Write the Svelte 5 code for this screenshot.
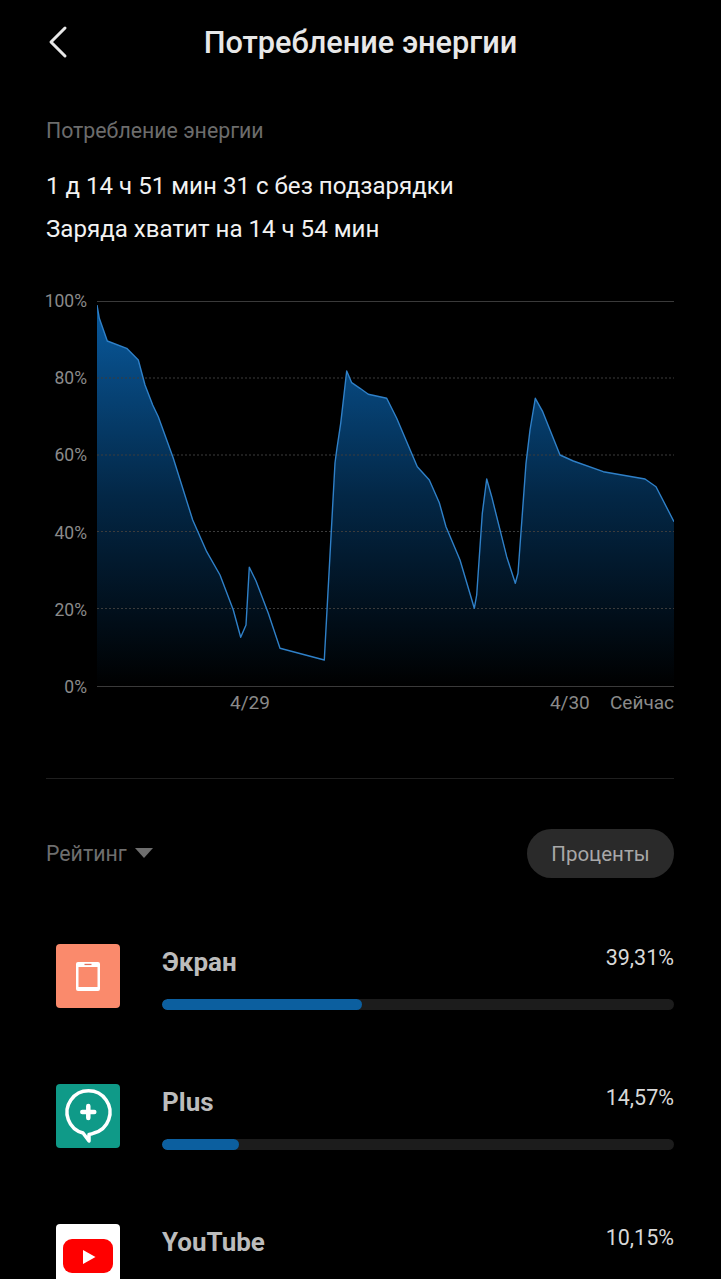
<script>
  const W = 577, H = 386;
  const raw = [[97,305],[99.3,318.3],[107.3,341],[126.7,348.3],[138.3,360],[145,385],[152.7,405],[158.3,416.7],[173.3,458.3],[192.7,520],[206.7,551.7],[220,575],[233.3,610],[240.7,637.3],[246,625],[249.3,567.3],[256,581],[268.3,613.3],[280,648.3],[324.3,660],[335,463],[336.7,450],[340.7,423.3],[346.7,371],[351.7,382.7],[360,388.3],[368.3,394.3],[386.7,398.3],[396.7,418.3],[417.3,466.7],[429.3,480],[439.3,502.7],[446,526.7],[460,560],[474.3,608.3],[476.7,595],[482.3,513.3],[486.7,479],[491.7,496.7],[506.7,556.7],[515.3,583.3],[518,573.3],[526,463.3],[530,430],[535.3,398.3],[542.7,411.7],[560,455],[573.3,461],[603.3,471.7],[645,479],[656,486.7],[674,521.7]];
  const line = raw.map(([x, y]) => `${(x - 97).toFixed(1)},${(y - 301).toFixed(1)}`).join(' ');
  const area = `0,${H} ${line} ${W},${H}`;
  const yLabels = ['100%', '80%', '60%', '40%', '20%', '0%'];
  const dashed = [77, 154, 230.5, 307.5];
  const rows = [
    { name: 'Экран', pct: '39,31%', w: 200, icon: 'screen' },
    { name: 'Plus', pct: '14,57%', w: 77, icon: 'plus' },
    { name: 'YouTube', pct: '10,15%', w: 56, icon: 'yt' }
  ];
</script>

<div class="page">
  <header class="top">
    <svg class="back" width="22" height="34" viewBox="0 0 22 34"><path d="M18 3 L4 17 L18 31" fill="none" stroke="#e8e8e8" stroke-width="3" stroke-linecap="round" stroke-linejoin="round"/></svg>
    <h1>Потребление энергии</h1>
  </header>

  <section class="summary">
    <div class="cap">Потребление энергии</div>
    <div class="line first">1 д 14 ч 51 мин 31 с без подзарядки</div>
    <div class="line second">Заряда хватит на 14 ч 54 мин</div>
  </section>

  <section class="chart">
    <div class="ylabels">
      {#each yLabels as l}<span>{l}</span>{/each}
    </div>
    <svg class="plot" width={W} height={H + 1} viewBox="0 0 {W} {H + 1}">
      <defs>
        <linearGradient id="fill" x1="0" y1="0" x2="0" y2="1">
          <stop offset="0" stop-color="#095a9e" />
          <stop offset="0.5" stop-color="#032746" />
          <stop offset="1" stop-color="#000" />
        </linearGradient>
      </defs>
      <polygon points={area} fill="url(#fill)" />
      <line x1="0" x2={W} y1="0.5" y2="0.5" stroke="#3a3a3a" />
      <line x1="0" x2={W} y1="385.5" y2="385.5" stroke="#3a3a3a" />
      {#each dashed as y}
        <line x1="0" x2={W} y1={y} y2={y} stroke="#3c3c3c" stroke-dasharray="2 2" />
      {/each}
      <polyline points={line} fill="none" stroke="#2f80c8" stroke-width="1.4" stroke-linejoin="round" />
    </svg>
    <div class="xlabels">
      <span class="d1">4/29</span>
      <span class="d2">4/30</span>
      <span>Сейчас</span>
    </div>
  </section>

  <hr class="sep" />

  <section class="sort">
    <div class="rating">Рейтинг <i class="tri"></i></div>
    <div class="pill">Проценты</div>
  </section>

  <section class="list">
    {#each rows as r}
      <div class="row">
        <div class="icon {r.icon}">
          {#if r.icon === 'screen'}
            <svg width="24" height="29" viewBox="0 0 24 29"><rect width="24" height="29" rx="2" fill="#fff"/><rect x="2.500" y="5" width="19" height="20" fill="#fa8a6c"/><rect x="8.500" y="1.800" width="7" height="1.300" fill="#e0705a"/></svg>
          {:else if r.icon === 'plus'}
            <svg width="64" height="64" viewBox="0 0 64 64"><path d="M38 49 A21.500 21.500 0 1 0 27 49 L33 57 L33 50.500 Q36 50 38 49 Z" fill="none" stroke="#fff" stroke-width="3.500" stroke-linejoin="round"/><path d="M32.300 22 V34 M26.300 28 H38.300" stroke="#fff" stroke-width="4.500" stroke-linecap="round"/></svg>
          {:else}
            <svg width="50" height="34" viewBox="0 0 50 34"><rect width="50" height="34" rx="9" fill="#f00"/><path d="M20 11 L32.500 18 L20 25 Z" fill="#fff"/></svg>
          {/if}
        </div>
        <div class="info">
          <div class="head">
            <span class="name">{r.name}</span>
            <span class="pct">{r.pct}</span>
          </div>
          <div class="track"><div class="bar" style="width:{r.w}px"></div></div>
        </div>
      </div>
    {/each}
  </section>
</div>

<style>
  :global(body) { margin: 0; background: #000; }
  .page {
    width: 721px; height: 1279px; overflow: hidden; background: #000;
    font-family: Roboto, "Noto Sans", sans-serif; box-sizing: border-box;
  }
  .top { display: flex; align-items: center; height: 84px; padding-left: 47px; position: relative; }
  .back { margin-top: -1px; }
  h1 {
    position: absolute; left: 0; right: 0; top: 26px; margin: 0; text-align: center;
    font-size: 30.7px; line-height: 34px; font-weight: 500; color: #e8e8e8;
  }
  .summary { padding: 0 46px; }
  .cap { margin-top: 33px; font-size: 21.3px; line-height: 28px; color: #6c6c6c; }
  .line { font-size: 24.1px; line-height: 30px; color: #f2f2f2; }
  .first { margin-top: 26px; }
  .second { margin-top: 13px; }
  .chart {
    display: grid; grid-template-columns: 51px 577px; margin: 57px 0 0 46px;
    grid-template-rows: auto auto;
  }
  .ylabels {
    display: flex; flex-direction: column; justify-content: space-between; align-items: flex-end;
    height: 386px; padding-right: 10px; box-sizing: border-box;
    font-size: 17.5px; color: #8a8a8a;
  }
  .ylabels span { line-height: 0; }
  .plot { display: block; }
  .xlabels {
    grid-column: 2; display: flex; align-items: center; height: 29px;
    font-size: 19px; color: #8a8a8a;
  }
  .d1 { margin-left: 133px; }
  .d2 { margin-left: 280px; }
  .xlabels span:last-child { margin-left: auto; }
  .sep { margin: 61px 47px 0 46px; border: 0; border-top: 1px solid #1f1f1f; }
  .sort {
    display: flex; justify-content: space-between; align-items: center;
    margin: 50px 47px 0 46px; height: 49px;
  }
  .rating { display: flex; align-items: center; gap: 8px; font-size: 21.3px; color: #6e6e6e; }
  .tri {
    width: 0; height: 0; border-left: 9px solid transparent; border-right: 9px solid transparent;
    border-top: 10px solid #6e6e6e; margin-top: -1px;
  }
  .pill {
    width: 147px; height: 49px; border-radius: 25px; background: #2a2a2a; color: #a8a8a8;
    display: flex; align-items: center; justify-content: center; font-size: 20.500px;
  }
  .list { margin: 66px 47px 0 56px; display: flex; flex-direction: column; gap: 76px; }
  .row { display: flex; gap: 42px; height: 64px; }
  .icon {
    width: 64px; height: 64px; border-radius: 4px; flex: none;
    display: flex; align-items: center; justify-content: center;
  }
  .screen { background: #fa8a6c; }
  .plus { background: #0f9a88; }
  .yt { background: #fff; }
  .info { flex: 1; }
  .head { display: flex; justify-content: space-between; height: 55px; }
  .name { font-size: 26px; line-height: 36px; font-weight: 700; color: #bcbcbc; }
  .pct { font-size: 21.5px; line-height: 28px; color: #d8d8d8; }
  .track { height: 11px; border-radius: 6px; background: #1c1c1c; overflow: hidden; }
  .bar { height: 100%; border-radius: 6px; background: #0c5f9f; }
</style>
